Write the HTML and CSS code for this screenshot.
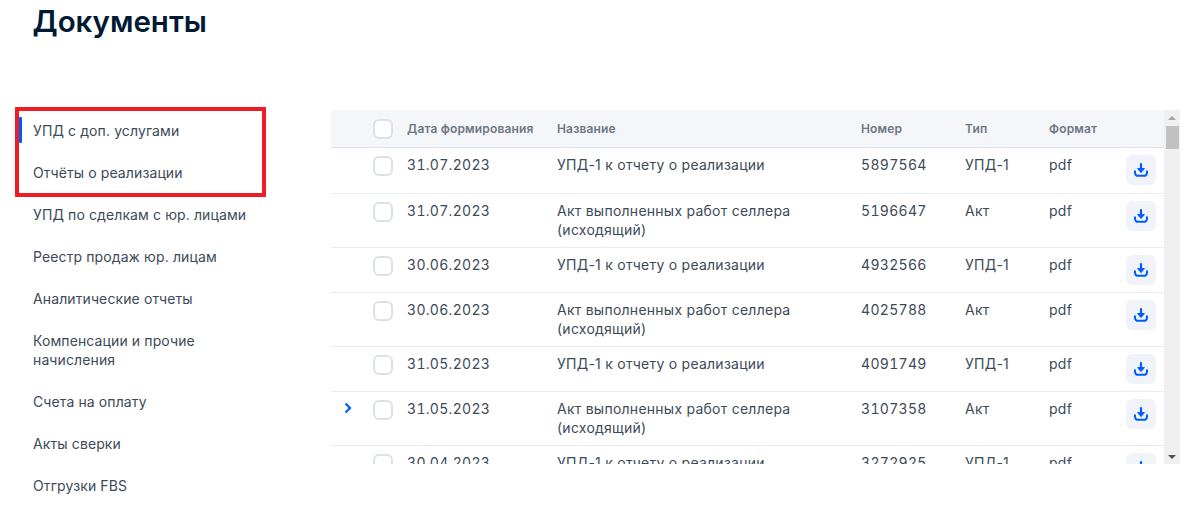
FILE: index.html
```html
<!DOCTYPE html>
<html lang="ru">
<head>
<meta charset="utf-8">
<title>Документы</title>
<link rel="stylesheet" href="styles.css">
</head>
<body>
<svg class="sprite" width="0" height="0" aria-hidden="true"><defs>
<symbol id="dl" viewBox="0 0 16 16"><path d="M8 2v6.2" fill="none" stroke="currentColor" stroke-width="2.2" stroke-linecap="round"/><path d="M4.6 6.6h6.8L8 10.6z" fill="currentColor" stroke="currentColor" stroke-width="1" stroke-linejoin="round"/><path d="M2 9.2v1.6a3 3 0 0 0 3 3h6a3 3 0 0 0 3-3V9.2" fill="none" stroke="currentColor" stroke-width="2" stroke-linecap="round"/></symbol>
</defs></svg>
<h1 class="title">Документы</h1>
<div class="layout">
  <nav class="side">
    <span class="highlight"></span>
    <a class="item active">УПД с доп. услугами</a>
    <a class="item">Отчёты о реализации</a>
    <a class="item">УПД по сделкам с юр. лицами</a>
    <a class="item">Реестр продаж юр. лицам</a>
    <a class="item">Аналитические отчеты</a>
    <a class="item">Компенсации и прочие начисления</a>
    <a class="item">Счета на оплату</a>
    <a class="item">Акты сверки</a>
    <a class="item">Отгрузки FBS</a>
  </nav>
  <section class="panel">
    <div class="table">
      <div class="row head">
        <span class="c-arrow"></span><span class="check"></span><span>Дата формирования</span><span>Название</span><span>Номер</span><span>Тип</span><span>Формат</span><span></span>
      </div>
      <div class="row first"><span class="c-arrow"></span><span class="check"></span><span class="num">31.07.2023</span><span>УПД-1 к отчету о реализации</span><span class="num">5897564</span><span>УПД-1</span><span>pdf</span><button class="dl"><svg width="16" height="16"><use href="#dl"/></svg></button></div>
      <div class="row tall"><span class="c-arrow"></span><span class="check"></span><span class="num">31.07.2023</span><span>Акт выполненных работ селлера (исходящий)</span><span class="num">5196647</span><span>Акт</span><span>pdf</span><button class="dl"><svg width="16" height="16"><use href="#dl"/></svg></button></div>
      <div class="row short"><span class="c-arrow"></span><span class="check"></span><span class="num">30.06.2023</span><span>УПД-1 к отчету о реализации</span><span class="num">4932566</span><span>УПД-1</span><span>pdf</span><button class="dl"><svg width="16" height="16"><use href="#dl"/></svg></button></div>
      <div class="row tall"><span class="c-arrow"></span><span class="check"></span><span class="num">30.06.2023</span><span>Акт выполненных работ селлера (исходящий)</span><span class="num">4025788</span><span>Акт</span><span>pdf</span><button class="dl"><svg width="16" height="16"><use href="#dl"/></svg></button></div>
      <div class="row short"><span class="c-arrow"></span><span class="check"></span><span class="num">31.05.2023</span><span>УПД-1 к отчету о реализации</span><span class="num">4091749</span><span>УПД-1</span><span>pdf</span><button class="dl"><svg width="16" height="16"><use href="#dl"/></svg></button></div>
      <div class="row tall"><span class="c-arrow"><svg width="10" height="16" viewBox="0 0 10 16"><path d="M3.500 3.500 8 8l-4.500 4.500" fill="none" stroke="#005bff" stroke-width="2.200"/></svg></span><span class="check"></span><span class="num">31.05.2023</span><span>Акт выполненных работ селлера (исходящий)</span><span class="num">3107358</span><span>Акт</span><span>pdf</span><button class="dl"><svg width="16" height="16"><use href="#dl"/></svg></button></div>
      <div class="row short"><span class="c-arrow"></span><span class="check"></span><span class="num">30.04.2023</span><span>УПД-1 к отчету о реализации</span><span class="num">3272925</span><span>УПД-1</span><span>pdf</span><button class="dl"><svg width="16" height="16"><use href="#dl"/></svg></button></div>
    </div>
    <div class="scrollbar">
      <span class="tri up"></span>
      <span class="thumb"></span>
      <span class="tri down"></span>
    </div>
  </section>
</div>
</body>
</html>
```

FILE: styles.css
```css
* { box-sizing: border-box; }
html, body { margin: 0; height: 513px; overflow: hidden; background: #fff; }
body { font-family: Inter, "Liberation Sans", sans-serif; color: #1b2533; }
.sprite { position: absolute; }
.title { margin: 0; padding: 0 0 0 32.500px; font-size: 29.500px; line-height: 43px; font-weight: 600; color: #001a34; height: 110px; }
.layout { display: flex; align-items: flex-start; }
.side { position: relative; width: 331px; padding-right: 60px; flex: none; }
.item { display: block; padding: 11px 0 12px 33px; font-size: 14px; line-height: 19px; letter-spacing: .11px; color: #3d4a58; position: relative; }
.item.active::before { content: ""; position: absolute; left: 19px; top: 7px; width: 3px; height: 26px; background: #005bff; border-radius: 1px; }
.highlight { position: absolute; left: 15px; top: -3px; width: 251px; height: 90px; border: 4px solid #ee1c25; pointer-events: none; }
.panel { display: flex; width: 849px; height: 354px; overflow: hidden; }
.table { width: 833px; flex: none; height: 354px; overflow: hidden; }
.row { display: grid; grid-template-columns: 42px 34px 150px 304px 104px 84px 77px 30px; border-bottom: 1px solid #e7ecf2; font-size: 14px; line-height: 19px; letter-spacing: .25px; color: #3d4a58; padding-top: 7px; }
.row.first { height: 46px; }
.row.short { height: 45px; }
.row.tall { height: 54px; }
.row.head { height: 38px; background: #f5f6fa; border-bottom: 1px solid #dde3ec; font-size: 12px; font-weight: 600; letter-spacing: .17px; color: #6b7885; align-items: center; padding-top: 0; }
.num { font-variant-numeric: tabular-nums; letter-spacing: .3px; }
.c-arrow { display: flex; justify-content: flex-start; padding: 1px 0 0 11px; }
.check { width: 20px; height: 20px; border: 2px solid #dbe1ea; border-radius: 6px; background: #fff; margin-top: 1px; }
.row.head .check { margin-top: 0; }
.dl { width: 30px; height: 30px; margin: 0; padding: 0; border: 0; border-radius: 6px; background: #f0f4fa; color: #005bff; display: flex; align-items: center; justify-content: center; }
.scrollbar { width: 16px; flex: none; background: #f0f0f0; display: flex; flex-direction: column; align-items: center; position: relative; }
.thumb { width: 13px; height: 23px; margin-top: 1px; background: #c1c1c1; }
.tri { width: 0; height: 0; border-left: 4px solid transparent; border-right: 4px solid transparent; }
.tri.up { border-bottom: 4px solid #a3a3a3; margin-top: 6px; margin-bottom: 5px; }
.tri.down { border-top: 4px solid #505050; margin-top: auto; margin-bottom: 5px; }
```
